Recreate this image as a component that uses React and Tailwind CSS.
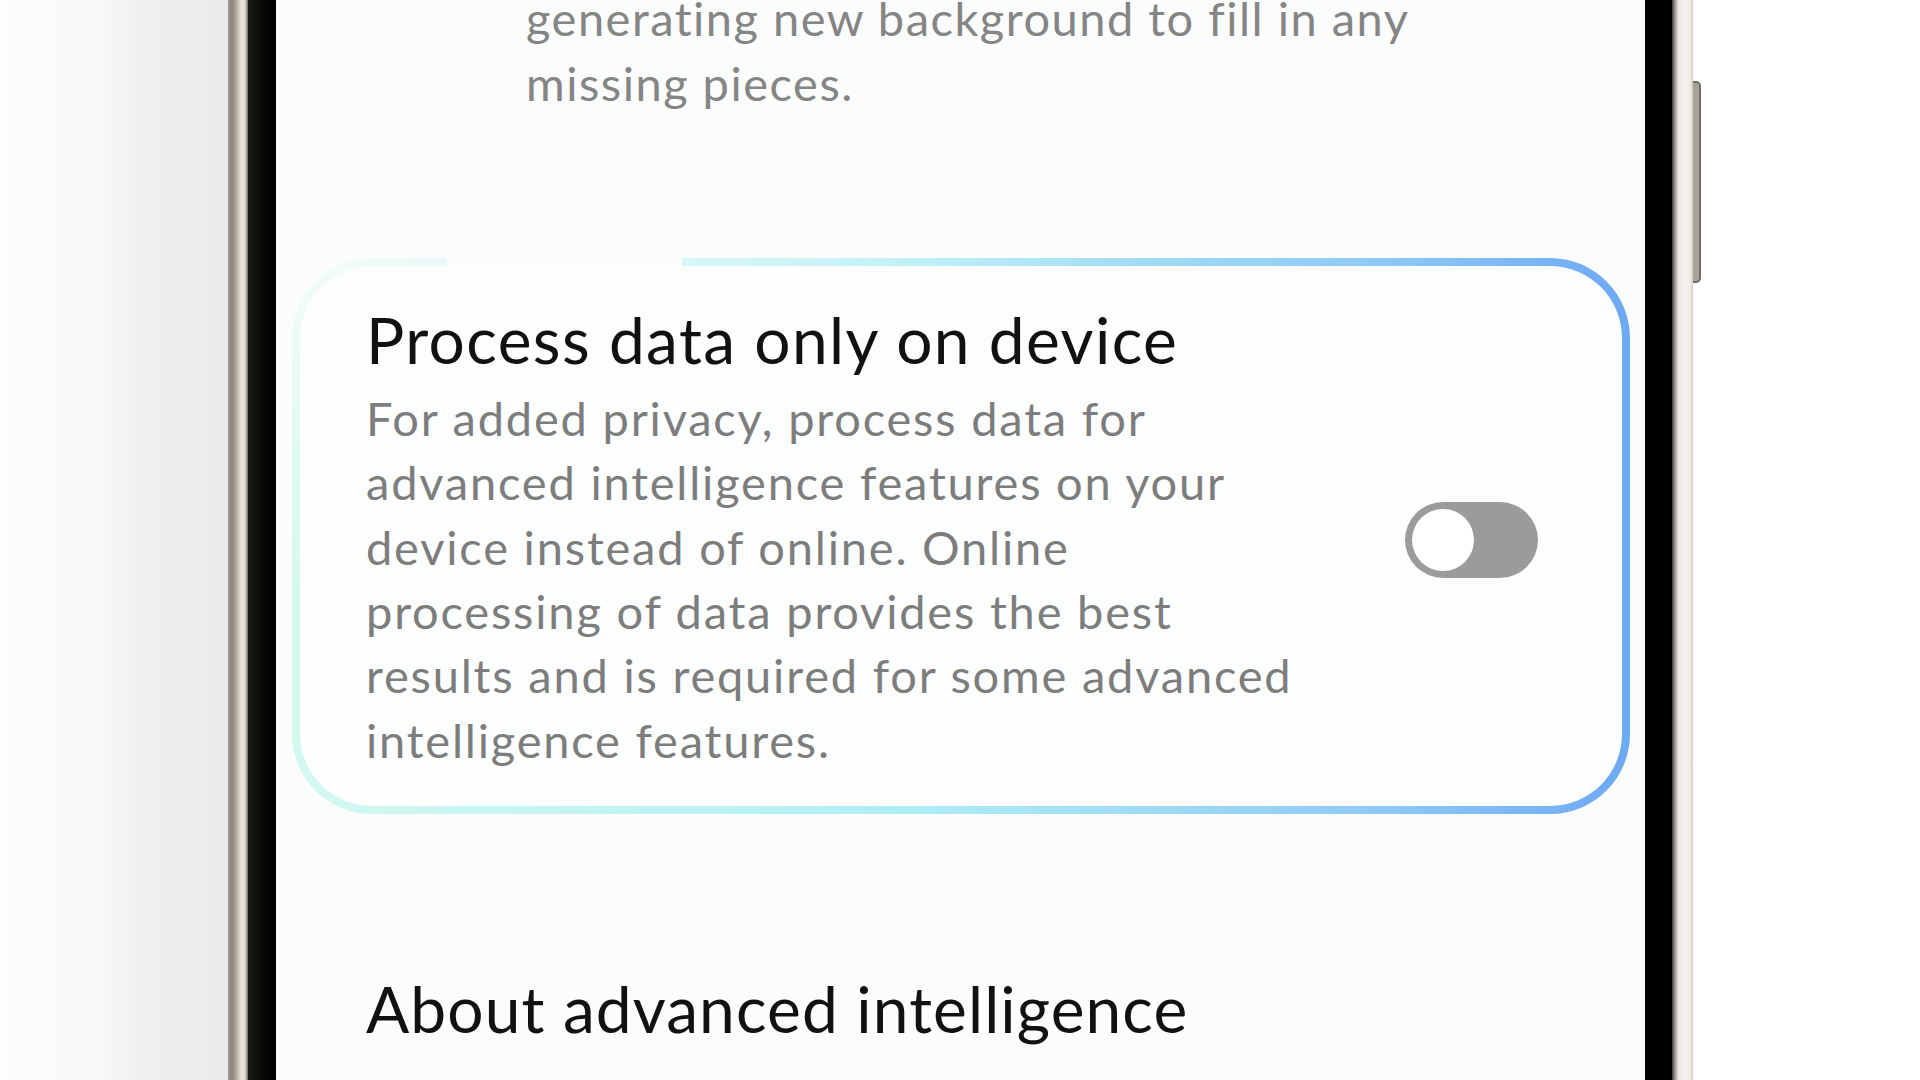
import React from "react";

const bodyLines = [
  "For added privacy, process data for",
  "advanced intelligence features on your",
  "device instead of online. Online",
  "processing of data provides the best",
  "results and is required for some advanced",
  "intelligence features.",
];

function Toggle() {
  return (
    <div className="mt-[7px] w-[133px] h-[76px] rounded-full bg-[#9b9b9b] flex items-center pl-[7px] shrink-0">
      <div className="w-[62px] h-[62px] rounded-full bg-white" />
    </div>
  );
}

export default function App() {
  return (
    <div className="w-[1920px] h-[1080px] overflow-hidden flex bg-white font-[Lato,sans-serif]">
      {/* left background shadow */}
      <div className="w-[228px] h-full shrink-0 bg-[linear-gradient(90deg,#fdfdfd_0%,#f8f8f8_45%,#efefef_62%,#ebebeb_100%)]" />
      {/* left rim */}
      <div className="w-[20px] h-full shrink-0 bg-[linear-gradient(90deg,#a39d94_0%,#8a847c_20%,#b7b0a4_45%,#e9e4da_65%,#e2ddd2_85%,#6a665f_100%)]" />
      {/* left bezel */}
      <div className="w-[28px] h-full shrink-0 bg-[linear-gradient(90deg,#1c1b16_0%,#0a0a08_50%,#000000_100%)]" />
      {/* screen */}
      <div className="w-[1369px] h-full shrink-0 bg-[#fbfcfc] flex flex-col px-[16px] text-[47px] leading-[65px]">
        <div className="mt-[-14px] pl-[234px] text-[#858585] tracking-[1.5px]">
          <div className="whitespace-nowrap">generating new background to fill in any</div>
          <div className="whitespace-nowrap">missing pieces.</div>
        </div>

        {/* card */}
        <div className="relative mt-[142px] w-[1338px] h-[556px] rounded-[80px] p-[8px] bg-[radial-gradient(ellipse_at_0%_0%,rgba(251,252,252,0.8)_0%,rgba(251,252,252,0)_45%),linear-gradient(90deg,#d3f8f0_0%,#c0f3f2_25%,#b0eef5_45%,#92caf6_80%,#6ca9f3_100%)]">
          <div className="absolute top-[-1px] left-[155px] w-[235px] h-[11px] bg-[#fbfcfc]" />
          <div className="w-full h-full rounded-[72px] bg-[#fcfdfd] flex items-center pl-[66px] pr-[84px]">
            <div className="flex-1 pt-[2px]">
              <div className="text-[64px] leading-[76px] text-[#111111] whitespace-nowrap tracking-[1.4px]">
                Process data only on device
              </div>
              <div className="mt-[8px] text-[47px] leading-[64.3px] text-[#7d7d7d] tracking-[1.8px]">
                {bodyLines.map((l) => (
                  <div key={l} className="whitespace-nowrap">{l}</div>
                ))}
              </div>
            </div>
            <Toggle />
          </div>
        </div>

        <div className="mt-[157px] pl-[74px] text-[64px] leading-[76px] text-[#111111] whitespace-nowrap tracking-[1.1px]">
          About advanced intelligence
        </div>
      </div>
      {/* right bezel */}
      <div className="w-[27px] h-full shrink-0 bg-black" />
      {/* right rim */}
      <div className="w-[21px] h-full shrink-0 bg-[linear-gradient(90deg,#3a3936_0%,#8f8b84_12%,#e9e6df_30%,#f3f1eb_60%,#f1eee8_85%,#cfcbc3_100%)]" />
      {/* right background with side button */}
      <div className="flex-1 h-full flex flex-col">
        <div className="mt-[81px] w-[8px] h-[202px] rounded-r-[5px] border-[2px] border-l-0 border-[#6f6c66] bg-[#a7a39b]" />
      </div>
    </div>
  );
}
